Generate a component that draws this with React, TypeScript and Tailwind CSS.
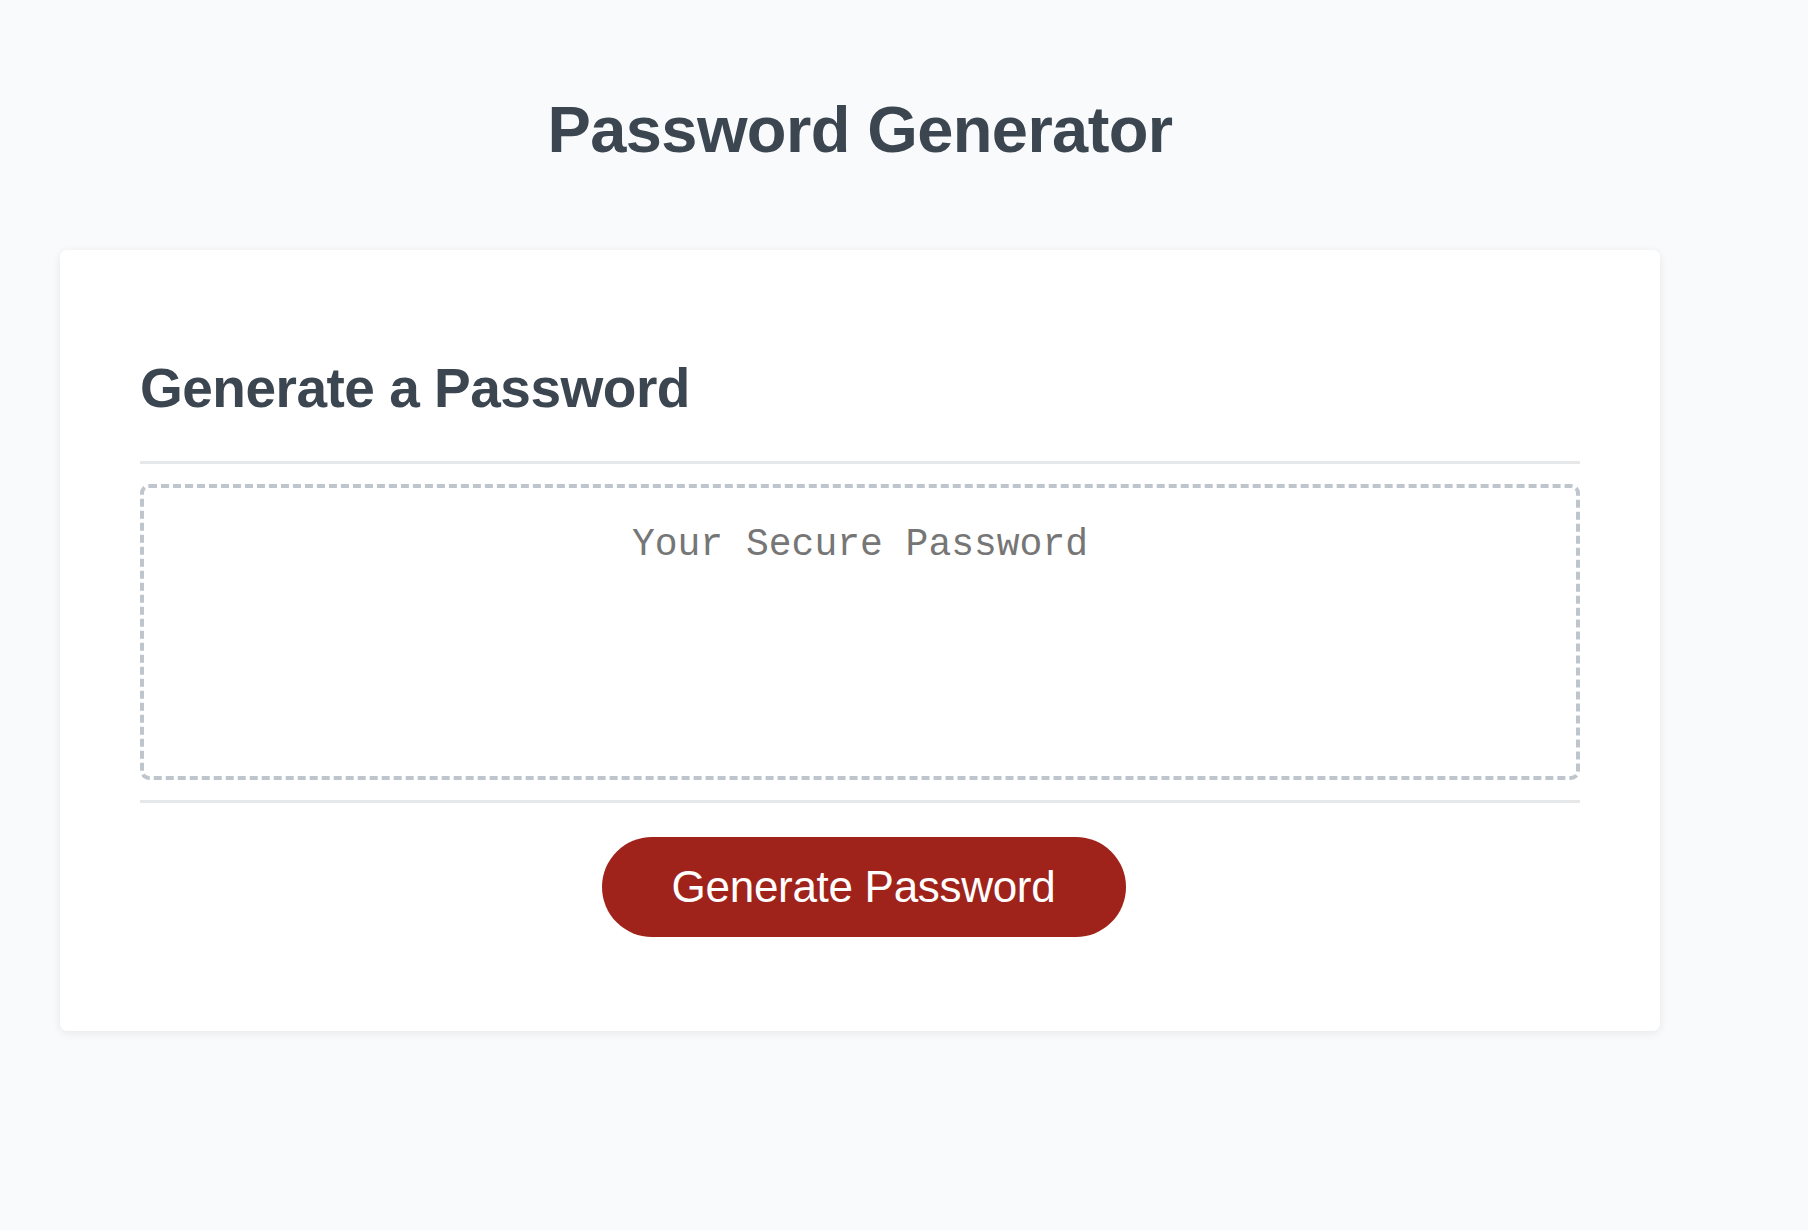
import React from "react";

export default function App() {
  return (
    <div className="min-h-[1230px] w-full bg-[#f9fafb] font-['Liberation_Sans',Arial,sans-serif]">
      <div className="ml-[60px] w-[1600px] pt-[97px]">
        <h1 className="text-center text-[65px] font-bold leading-none tracking-[-0.6px] text-[#3b4651]">
          Password Generator
        </h1>

        <div className="mt-[88px] rounded-[7px] bg-white px-[80px] pt-[111px] pb-[94px] shadow-[0_2px_10px_rgba(0,0,0,0.08)]">
          <h2 className="text-[55px] font-bold leading-none tracking-[-0.5px] text-[#3b4651]">
            Generate a Password
          </h2>

          <div className="mt-[45px] h-[3px] bg-[#e6e7e9]" />

          <div className="mt-[20px]">
            <textarea
              readOnly
              placeholder="Your Secure Password"
              className="block h-[296px] w-full resize-none rounded-[9px] border-4 border-dashed border-[#bfc5cd] bg-white px-6 pt-[38px] text-center font-['Liberation_Mono','Courier_New',monospace] text-[38px] leading-none text-[#757575] outline-none placeholder:text-[#767676]"
            />
          </div>

          <div className="mt-[20px] h-[3px] bg-[#e6e7e9]" />

          <div className="mt-[34px] flex justify-center">
            <button className="ml-[7px] h-[100px] w-[524px] rounded-full bg-[#9f231b] text-[44px] leading-none tracking-[-0.3px] text-white">
              Generate Password
            </button>
          </div>
        </div>
      </div>
    </div>
  );
}
